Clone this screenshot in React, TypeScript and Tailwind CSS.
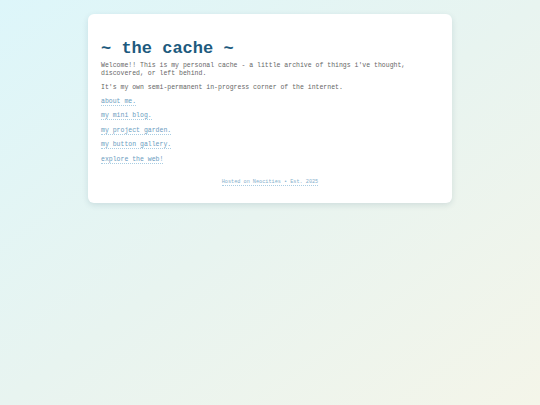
export default function App() {
  const links = [
    "about me.",
    "my mini blog.",
    "my project garden.",
    "my button gallery.",
    "explore the web!",
  ];

  return (
    <div className="min-h-screen h-[405px] overflow-hidden bg-gradient-to-br from-[#ddf6fa] via-[#e8f4f0] to-[#f4f5e9] font-['Liberation_Mono',monospace]">
      <div className="mx-auto mt-[14px] w-[364px] rounded-[6px] bg-white px-[13px] pt-[25px] pb-[17px] shadow-[0_2px_6px_rgba(0,60,80,0.12)]">
        <h1 className="text-[17px] leading-[20px] font-bold text-[#1d5a7e]">~ the cache ~</h1>
        <p className="mt-[3px] text-[6.5px] leading-[8px] text-[#666]">
          Welcome!! This is my personal cache - a little archive of things i've thought, discovered, or left behind.
        </p>
        <p className="mt-[6px] text-[6.5px] leading-[8px] text-[#666]">
          It's my own semi-permanent in-progress corner of the internet.
        </p>
        <div className="mt-[6px] flex flex-col items-start gap-[6.4px]">
          {links.map((l) => (
            <a
              key={l}
              href="#"
              className="text-[6.5px] leading-[7px] text-[#6a9cc0] border-b border-dotted border-[#a9cde2]"
            >
              {l}
            </a>
          ))}
        </div>
        <div className="mt-[15px] flex justify-center">
          <a
            href="#"
            className="text-[5.2px] leading-[6.5px] text-[#86b0cc] border-b border-dotted border-[#a9cde2]"
          >
            Hosted on Neocities • Est. 2025
          </a>
        </div>
      </div>
    </div>
  );
}
